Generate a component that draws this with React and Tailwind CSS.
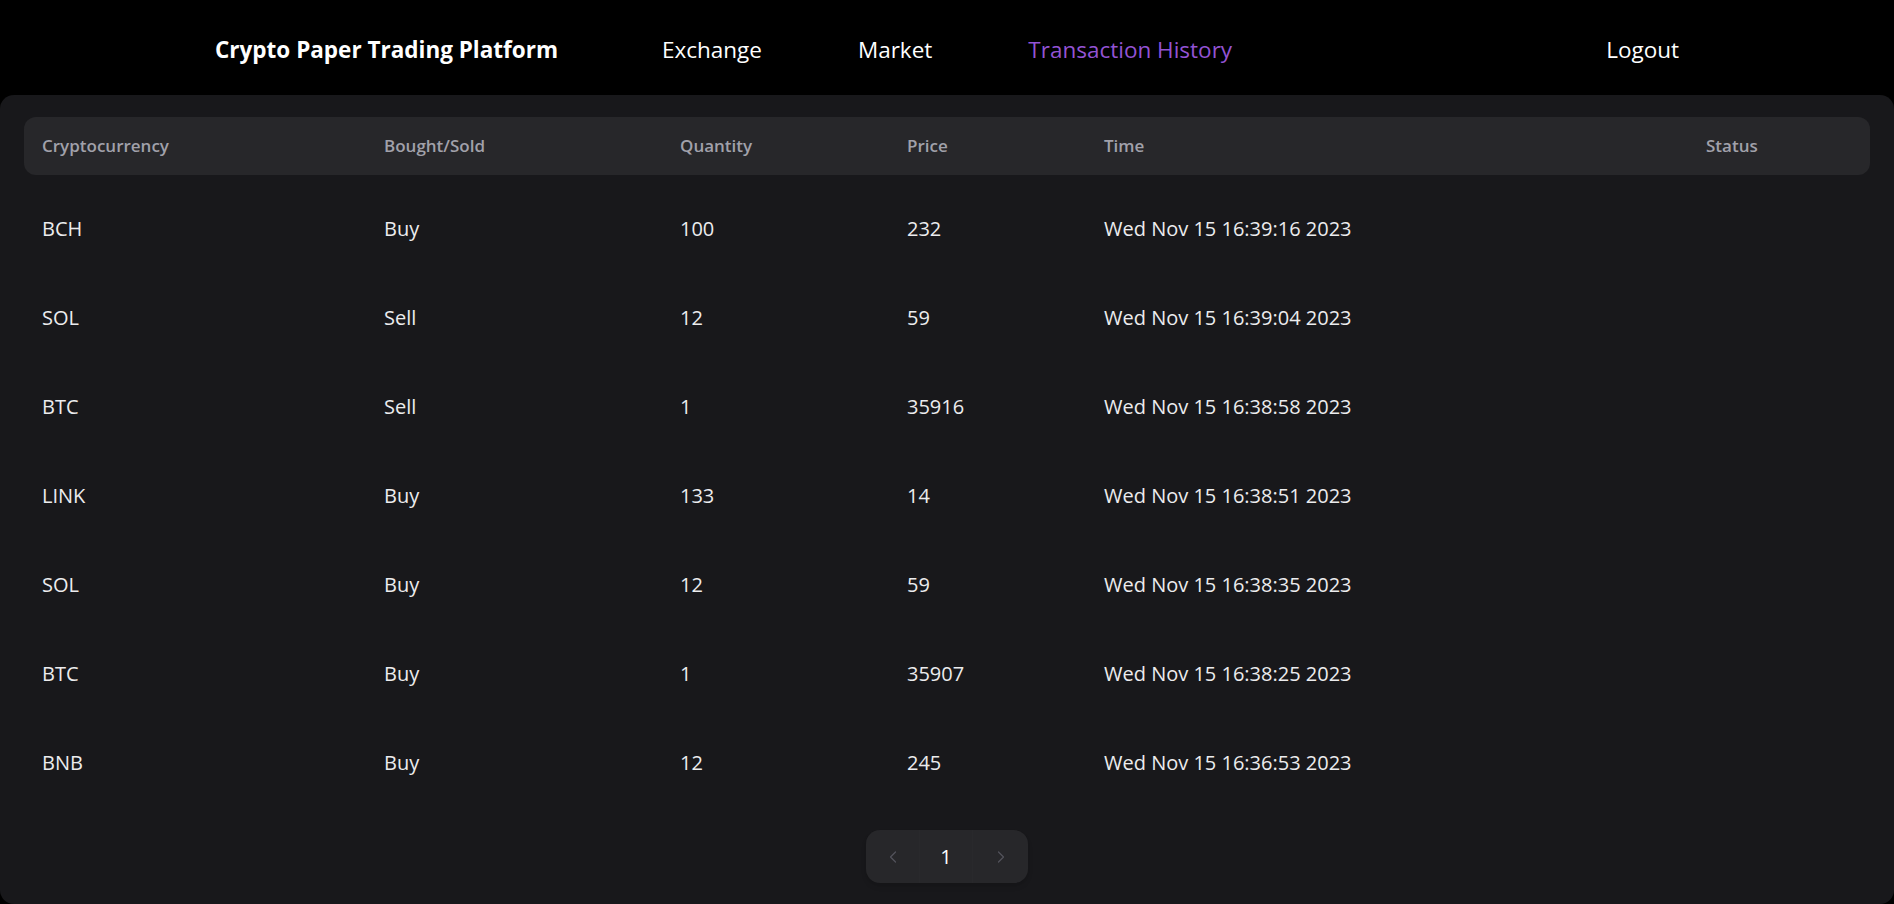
import { ChevronLeft, ChevronRight } from 'lucide-react'

const rows = [
  { coin: 'BCH', side: 'Buy', qty: 100, price: 232, time: 'Wed Nov 15 16:39:16 2023' },
  { coin: 'SOL', side: 'Sell', qty: 12, price: 59, time: 'Wed Nov 15 16:39:04 2023' },
  { coin: 'BTC', side: 'Sell', qty: 1, price: 35916, time: 'Wed Nov 15 16:38:58 2023' },
  { coin: 'LINK', side: 'Buy', qty: 133, price: 14, time: 'Wed Nov 15 16:38:51 2023' },
  { coin: 'SOL', side: 'Buy', qty: 12, price: 59, time: 'Wed Nov 15 16:38:35 2023' },
  { coin: 'BTC', side: 'Buy', qty: 1, price: 35907, time: 'Wed Nov 15 16:38:25 2023' },
  { coin: 'BNB', side: 'Buy', qty: 12, price: 245, time: 'Wed Nov 15 16:36:53 2023' },
]

const cols = 'grid grid-cols-[342px_296px_227px_197px_602px_1fr] px-[18px]'

function Navbar() {
  return (
    <nav className="h-[95px] pt-[5px] bg-black flex items-center justify-center">
      <div className="w-full max-w-[1464px] flex items-center">
        <div className="flex-1">
          <span className="text-white font-bold text-[22.5px]">Crypto Paper Trading Platform</span>
        </div>
        <div className="flex items-center gap-24 text-[22.5px]">
          <a className="text-white">Exchange</a>
          <a className="text-white">Market</a>
          <a className="text-[#9353d3]">Transaction History</a>
        </div>
        <div className="flex-1 flex justify-end">
          <a className="text-white text-[22.5px]">Logout</a>
        </div>
      </div>
    </nav>
  )
}

function Pagination() {
  return (
    <div className="flex justify-center">
      <div className="flex h-[53px] rounded-[14px] bg-[#27272a] shadow-md overflow-hidden">
        <button className="w-[53px] flex items-center justify-center text-[#52525b]">
          <ChevronLeft size={20} strokeWidth={1.5} />
        </button>
        <div className="w-[54px] flex items-center justify-center text-white text-[20px] border-x border-[#29292c]">1</div>
        <button className="w-[55px] flex items-center justify-center text-[#52525b]">
          <ChevronRight size={20} strokeWidth={1.5} />
        </button>
      </div>
    </div>
  )
}

export default function App() {
  return (
    <div className="min-h-screen bg-black font-['Open_Sans',sans-serif] flex flex-col">
      <Navbar />
      <div className="flex-1 bg-[#18181b] rounded-[14px] px-[24px] pt-[22px] pb-[17px]">
        <div className={`${cols} h-[58px] items-center bg-[#27272a] rounded-[12px] text-[#a1a1aa] text-[17px] font-semibold`}>
          <div>Cryptocurrency</div>
          <div>Bought/Sold</div>
          <div>Quantity</div>
          <div>Price</div>
          <div>Time</div>
          <div>Status</div>
        </div>
        <div className="pt-[9px] pb-[23px]">
          {rows.map((r, i) => (
            <div key={i} className={`${cols} h-[89px] items-center text-[#ececee] text-[20px]`}>
              <div>{r.coin}</div>
              <div>{r.side}</div>
              <div>{r.qty}</div>
              <div>{r.price}</div>
              <div>{r.time}</div>
              <div></div>
            </div>
          ))}
        </div>
        <Pagination />
      </div>
    </div>
  )
}
